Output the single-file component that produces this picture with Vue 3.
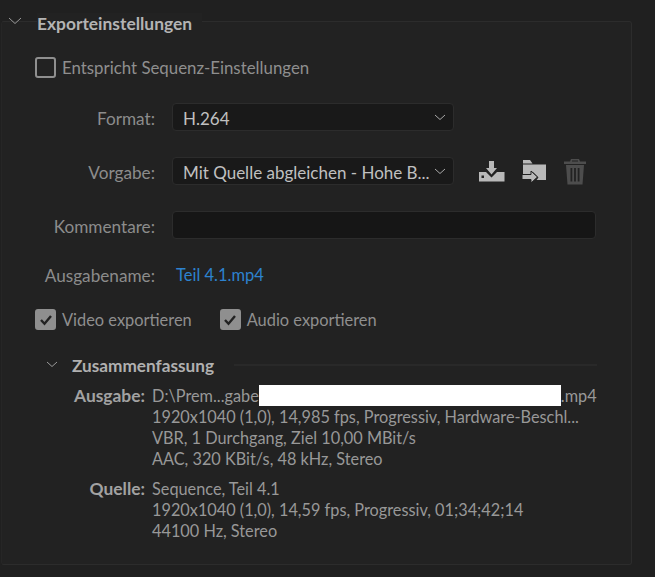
<script setup>
const ausgabe = [
  '1920x1040 (1,0), 14,985 fps, Progressiv, Hardware-Beschl...',
  'VBR, 1 Durchgang, Ziel 10,00 MBit/s',
  'AAC, 320 KBit/s, 48 kHz, Stereo'
]
const quelle = [
  'Sequence, Teil 4.1',
  '1920x1040 (1,0), 14,59 fps, Progressiv, 01;34;42;14',
  '44100 Hz, Stereo'
]
</script>

<template>
  <div class="page">
    <div class="head">
      <svg class="chev" width="14" height="8" viewBox="0 0 14 8"><path d="M1 1l6 5.5L13 1" fill="none" stroke="#9a9a9a" stroke-width="1"/></svg>
      <span class="title">Exporteinstellungen</span>
    </div>
    <section class="panel">
      <label class="check first"><span class="box"></span><span>Entspricht Sequenz-Einstellungen</span></label>

      <div class="row format">
        <span class="lab">Format:</span>
        <div class="select"><span class="val">H.264</span><svg width="12" height="7" viewBox="0 0 12 7"><path d="M1 1l5 4.5L11 1" fill="none" stroke="#a8a8a8" stroke-width="1"/></svg></div>
      </div>

      <div class="row vorgabe">
        <span class="lab">Vorgabe:</span>
        <div class="select"><span class="val">Mit Quelle abgleichen - Hohe B...</span><svg width="12" height="7" viewBox="0 0 12 7"><path d="M1 1l5 4.5L11 1" fill="none" stroke="#a8a8a8" stroke-width="1"/></svg></div>
        <div class="icons">
          <svg width="26" height="21" viewBox="0 0 26 21"><path fill="#b9b9b9" d="M10 0h5v7h3l-5.500 6.500L7 7h3zM0 11h7l5.500 5.500L18 11h7.500v9.500H0z"/><rect x="2.500" y="14.500" width="2.500" height="2.500" fill="#222"/></svg>
          <svg width="26" height="24" viewBox="0 0 26 24"><path fill="#b9b9b9" d="M2 1h7l2.500 3.500H2zM2 5.500h23V21H15.500l2-2.500-6-6v3H2z"/><path fill="#b9b9b9" stroke="#222" stroke-width="1" d="M1 15.500h9V12l6.500 6-6.500 6v-3.500H1z"/></svg>
          <svg width="24" height="27" viewBox="0 0 24 27"><path fill="#4d4d4d" d="M8 1h8l1 2.500h6V6H1V3.500h6zM9 2.600v.9h6v-.9zM3 7h18l-1.500 19.500h-15zM7.500 10v13.500h1.800V10zM11.100 10v13.500h1.800V10zM14.700 10v13.500h1.800V10z"/></svg>
        </div>
      </div>

      <div class="row komm">
        <span class="lab">Kommentare:</span>
        <div class="input"></div>
      </div>

      <div class="row name">
        <span class="lab">Ausgabename:</span>
        <a class="link">Teil 4.1.mp4</a>
      </div>

      <div class="exports">
        <label class="check small"><span class="box on"><svg width="14" height="12" viewBox="0 0 14 12"><path d="M2 6l3.500 3.800L12 2" fill="none" stroke="#222" stroke-width="2.400"/></svg></span><span>Video exportieren</span></label>
        <label class="check small"><span class="box on"><svg width="14" height="12" viewBox="0 0 14 12"><path d="M2 6l3.500 3.800L12 2" fill="none" stroke="#222" stroke-width="2.400"/></svg></span><span>Audio exportieren</span></label>
      </div>

      <div class="sumhead">
        <svg class="sumchev" width="12" height="7" viewBox="0 0 12 7"><path d="M1 1l5 4.500L11 1" fill="none" stroke="#9a9a9a" stroke-width="1"/></svg>
        <span class="sumtitle">Zusammenfassung</span>
        <span class="rule"></span>
      </div>

      <div class="summary">
        <span class="k">Ausgabe:</span>
        <div class="v">
          <div class="l">D:\Prem...gabe<span class="mask"></span>.mp4</div>
          <div class="l" v-for="t in ausgabe" :key="t">{{ t }}</div>
        </div>
        <span class="k q">Quelle:</span>
        <div class="v q">
          <div class="l" v-for="t in quelle" :key="t">{{ t }}</div>
        </div>
      </div>
    </section>
  </div>
</template>

<style>
html, body { margin: 0; background: #1f1f1f; }
</style>

<style scoped>
.page {
  width: 655px;
  height: 577px;
  overflow: hidden;
  position: relative;
  background: #202020;
  font-family: Lato, "Noto Sans", sans-serif;
  font-size: 16.500px;
  color: #989898;
}
.head {
  position: absolute;
  left: 0;
  top: 13px;
  height: 22px;
  display: flex;
  align-items: center;
  z-index: 1;
}
.chev { margin-left: 8px; margin-top: -6px; }
.title {
  margin-left: 15px;
  padding-right: 10px;
  padding-bottom: 2px;
  font-size: 17.400px;
  font-weight: 700;
  color: #b4b4b4;
  background: #222;
}
.panel {
  position: absolute;
  left: 1px;
  top: 21px;
  width: 629px;
  height: 542px;
  border: 1px solid #2c2c2c;
  border-left-color: #262626;
  border-radius: 3px;
  background: #222;
  box-sizing: content-box;
}
.check { display: flex; align-items: center; gap: 6px; color: #8f8f8f; }
.first { margin: 35px 0 0 33px; height: 21px; font-size: 16.850px; }
.small { font-size: 16.400px; }
.box {
  width: 21px;
  height: 21px;
  box-sizing: border-box;
  border: 2px solid #8f8f8f;
  border-radius: 3px;
  display: flex;
  align-items: center;
  justify-content: center;
}
.box.on { background: #8f8f8f; }
.row { display: flex; align-items: center; height: 28px; }
.lab { width: 153px; text-align: right; flex: none; color: #8c8c8c; font-size: 17.200px; padding-top: 2px; }
.name .lab { padding-top: 0; }
.format { margin-top: 25px; }
.vorgabe { margin-top: 26px; }
.komm { margin-top: 26px; }
.name { margin-top: 22px; }
.select, .input {
  margin-left: 17px;
  box-sizing: border-box;
  height: 28px;
  background: #191919;
  border: 1px solid #2c2c2c;
  border-radius: 4px;
}
.select {
  width: 282px;
  display: flex;
  align-items: center;
  justify-content: space-between;
  padding: 0 7px 0 10px;
}
.val { color: #c0c0c0; white-space: nowrap; font-size: 17px; padding-top: 2px; }
.input { width: 424px; background: #161616; }
.icons { display: flex; align-items: center; gap: 16px; margin-left: 25px; }
.link { margin-left: 21px; color: #2d82cf; }
.exports { display: flex; gap: 28px; margin: 20px 0 0 33px; height: 21px; }
.sumhead { display: flex; align-items: center; margin: 25px 0 0 44px; height: 22px; }
.sumchev { margin-top: -3px; }
.sumtitle { margin-left: 14px; padding-bottom: 2px; font-size: 17.200px; font-weight: 700; color: #b0b0b0; }
.rule { flex: 1; margin: -3px 34px 0 20px; height: 2px; background: #292929; }
.summary {
  display: grid;
  grid-template-columns: 144px 1fr;
  column-gap: 6px;
  margin-top: 8px;
  line-height: 21px;
  font-size: 16.300px;
}
.k { text-align: right; font-weight: 700; color: #a2a2a2; font-size: 17.400px; padding-right: 1px; }
.q { margin-top: 9px; }
.l { white-space: nowrap; color: #989898; }
.mask { display: inline-block; width: 302px; height: 21px; background: #fff; vertical-align: top; }
</style>
